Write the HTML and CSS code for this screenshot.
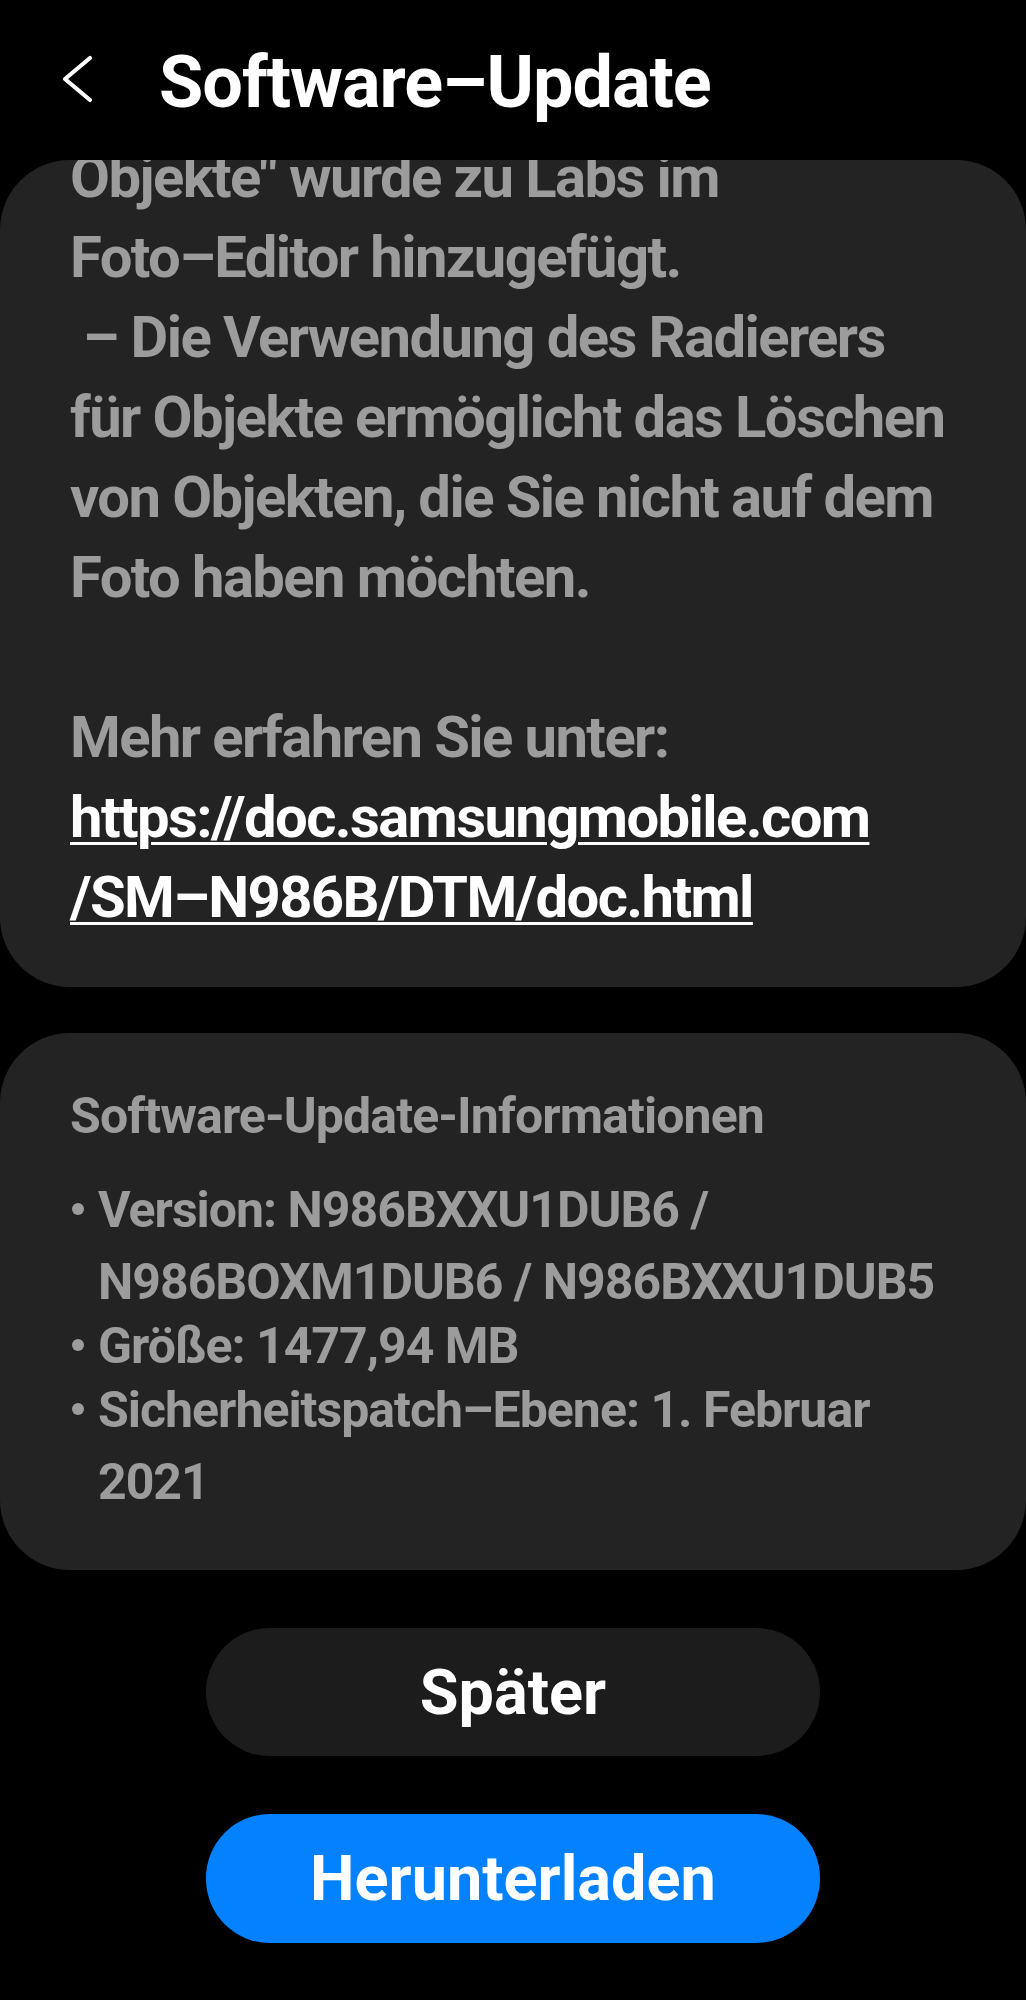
FILE: index.html
```html
<!DOCTYPE html>
<html lang="de">
  <head>
    <meta charset="UTF-8" />
    <meta name="viewport" content="width=device-width, initial-scale=1.0" />
    <title>Software–Update</title>
    <link rel="stylesheet" href="styles.css">
  </head>
  <body>
    <header class="topbar">
      <button class="back" aria-label="Zurück">
        <svg width="35" height="50" viewBox="0 0 35 50">
          <polyline points="30,4 5,25 30,46" fill="none" stroke="#fff" stroke-width="4.2" stroke-linecap="round" stroke-linejoin="round" />
        </svg>
      </button>
      <h1>Software–Update</h1>
    </header>

    <section class="card notes">
      <p class="notes-text">
        Objekte" wurde zu Labs im<br>
        Foto–Editor hinzugefügt.<br>
        &nbsp;– Die Verwendung des Radierers<br>
        für Objekte ermöglicht das Löschen<br>
        von Objekten, die Sie nicht auf dem<br>
        Foto haben möchten.<br>
        <br>
        Mehr erfahren Sie unter:<br>
        <a href="#">https://doc.samsungmobile.com<br>/SM–N986B/DTM/doc.html</a>
      </p>
    </section>

    <section class="card info">
      <h2>Software-Update-Informationen</h2>
      <ul>
        <li><span>Version: N986BXXU1DUB6 /<br>N986BOXM1DUB6 / N986BXXU1DUB5</span></li>
        <li><span>Größe: 1477,94 MB</span></li>
        <li><span>Sicherheitspatch–Ebene: 1. Februar<br>2021</span></li>
      </ul>
    </section>

    <div class="actions">
      <button class="btn later">Später</button>
      <button class="btn download">Herunterladen</button>
    </div>
  </body>
</html>
```

FILE: styles.css
```css
body {
  margin: 0;
  background-color: #000;
  font-family: Roboto, "Liberation Sans", sans-serif;
  font-weight: 700;
}

.topbar {
  display: flex;
  align-items: flex-start;
  height: 160px;
  padding: 33px 0 0 60px;
  box-sizing: border-box;
}

.back {
  width: 35px;
  height: 50px;
  margin-top: 21px;
  padding: 0;
  border: 0;
  background: none;
}

.back svg {
  display: block;
}

h1 {
  margin: 0 0 0 64px;
  font-size: 72px;
  line-height: 100px;
  color: #fff;
  letter-spacing: -1px;
}

.card {
  background-color: #232323;
  border-radius: 70px;
  overflow: hidden;
}

.notes {
  height: 827px;
  padding: 0 70px 52px;
  box-sizing: border-box;
}

.notes-text {
  margin: -23px 0 0;
  font-size: 58px;
  line-height: 80px;
  color: #9c9c9c;
  white-space: nowrap;
  letter-spacing: -1.6px;
}

.notes-text a {
  color: #fff;
  text-decoration: underline;
  text-decoration-thickness: 3px;
  text-underline-offset: 5px;
}

.info {
  margin-top: 46px;
  padding: 51px 70px 52px;
}

.info h2 {
  margin: 0;
  font-size: 50px;
  line-height: 64px;
  color: #9c9c9c;
  letter-spacing: -0.9px;
}

.info ul {
  margin: 26px 0 0;
  padding: 0;
  list-style: none;
}

.info li {
  display: grid;
  grid-template-columns: 28px 1fr;
  font-size: 50px;
  line-height: 72px;
  color: #9c9c9c;
  white-space: nowrap;
  letter-spacing: -1px;
}

.info li + li {
  margin-top: -8px;
}

.info li::before {
  content: "";
  width: 12px;
  height: 12px;
  margin: 29px 0 0 2px;
  border-radius: 50%;
  background-color: #9c9c9c;
}

.actions {
  display: flex;
  flex-direction: column;
  align-items: center;
  gap: 58px;
  margin-top: 58px;
}

.btn {
  width: 614px;
  height: 128px;
  border: 0;
  border-radius: 64px;
  font-family: Roboto, "Liberation Sans", sans-serif;
  font-weight: 700;
  font-size: 63px;
  color: #fff;
}

.later {
  background-color: #1c1c1c;
}

.download {
  height: 129px;
  background-color: #0381fe;
}
```
